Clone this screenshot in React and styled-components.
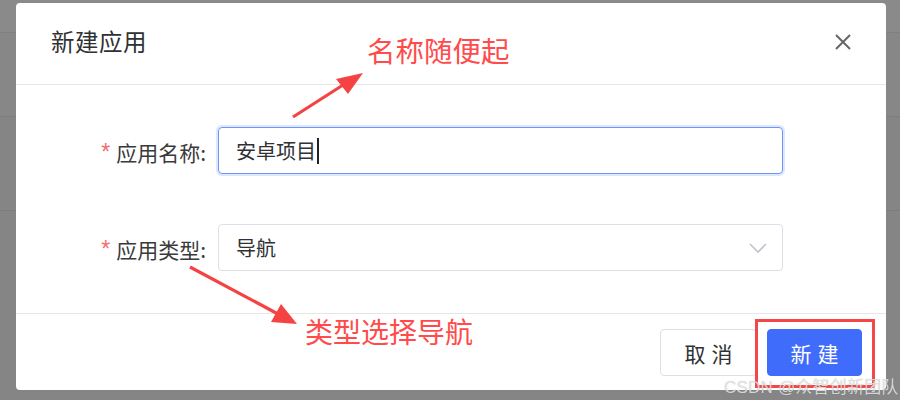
import React from "react";
import styled, { createGlobalStyle } from "styled-components";

const Global = createGlobalStyle`
  html, body { margin: 0; padding: 0; }
  body {
    width: 900px;
    height: 400px;
    overflow: hidden;
    font-family: "Noto Sans CJK SC", "Noto Sans", sans-serif;
  }
`;

const Page = styled.div`
  position: relative;
  width: 900px;
  height: 400px;
  background: #878787;
  display: flex;
  flex-direction: column;
  overflow: hidden;
`;

const BgBand = styled.div`
  height: ${(p) => p.$h}px;
  background: ${(p) => p.$bg};
  border-bottom: 1px solid ${(p) => p.$line};
`;

const Modal = styled.div`
  position: absolute;
  left: 16px;
  top: 3px;
  width: 870px;
  height: 387px;
  background: #fff;
  border-radius: 4px;
  display: flex;
  flex-direction: column;
`;

const Header = styled.div`
  height: 81px;
  border-bottom: 1px solid #e6e6e6;
  display: flex;
  align-items: center;
  justify-content: space-between;
  padding: 0 34px 0 35px;
`;

const Title = styled.div`
  font-size: 23.5px;
  color: #303133;
  letter-spacing: 0.5px;
  margin-top: -5px;
`;

const Close = styled.svg`
  width: 18px;
  height: 18px;
  margin-top: -3px;
`;

const Body = styled.div`
  height: 229px;
  border-bottom: 1px solid #e6e6e6;
  padding-top: 42px;
  box-sizing: border-box;
  display: flex;
  flex-direction: column;
  gap: 50px;
`;

const Row = styled.div`
  display: flex;
  align-items: center;
  height: 47px;
`;

const Label = styled.div`
  width: 202px;
  box-sizing: border-box;
  padding-right: 12px;
  text-align: right;
  font-size: 21px;
  color: #3a3a3a;
  display: flex;
  justify-content: flex-end;
  align-items: center;
  margin-top: 2px;
`;

const Star = styled.span`
  color: #f56c6c;
  margin-right: 6px;
  font-size: 23px;
  font-family: "Liberation Sans", sans-serif;
  margin-top: 2px;
`;

const Field = styled.div`
  width: 565px;
  height: 47px;
  box-sizing: border-box;
  border: 1px solid ${(p) => (p.$focus ? "#6d95f7" : "#dcdfe6")};
  box-shadow: ${(p) => (p.$focus ? "0 0 0 2px #dde7fd" : "none")};
  border-radius: 4px;
  display: flex;
  align-items: center;
  justify-content: space-between;
  padding: 0 15px 0 17px;
  font-size: 20px;
  color: #303133;
`;

const Value = styled.span`
  display: flex;
  align-items: center;
`;

const Caret = styled.span`
  display: inline-block;
  width: 2px;
  height: 26px;
  background: #222;
  margin-left: 1px;
`;

const Chevron = styled.svg`
  width: 18px;
  height: 12px;
`;

const Footer = styled.div`
  flex: 1;
  display: flex;
  justify-content: flex-end;
  align-items: flex-start;
  padding: 15px 24px 0 0;
  gap: 10px;
`;

const Button = styled.div`
  position: relative;
  width: ${(p) => p.$w}px;
  height: 47px;
  box-sizing: border-box;
  border-radius: 4px;
  border: 1px solid ${(p) => (p.$primary ? "#3f6cfb" : "#dcdfe6")};
  background: ${(p) => (p.$primary ? "#3f6cfb" : "#fff")};
  color: ${(p) => (p.$primary ? "#fff" : "#303133")};
  font-size: 21px;
  letter-spacing: 6px;
  display: flex;
  align-items: center;
  justify-content: center;
  padding-left: 6px;
`;

const Highlight = styled.div`
  position: absolute;
  left: -13px;
  top: -11px;
  width: 120px;
  height: 69px;
  box-sizing: border-box;
  border: 3px solid #f44848;
  pointer-events: none;
`;

const Note = styled.div`
  position: absolute;
  left: ${(p) => p.$x}px;
  top: ${(p) => p.$y}px;
  font-size: ${(p) => p.$size}px;
  color: #ff4b4b;
  white-space: nowrap;
  line-height: 1;
`;

const Arrows = styled.svg`
  position: absolute;
  left: 0;
  top: 0;
  width: 900px;
  height: 400px;
  pointer-events: none;
`;

const Watermark = styled.div`
  position: absolute;
  left: 724px;
  top: 373px;
  font-family: "Liberation Sans", "Noto Sans CJK SC", sans-serif;
  font-size: 17px;
  color: rgba(228, 228, 228, 0.9);
  text-shadow: 0 0 1px rgba(0, 0, 0, 0.2);
  white-space: nowrap;
  letter-spacing: 0.2px;
`;

export default function App() {
  return (
    <>
      <Global />
      <Page>
        <BgBand $h={32} $bg="#8a8a8a" $line="#808080" />
        <BgBand $h={84} $bg="#878787" $line="#7e7e7e" />
        <BgBand $h={95} $bg="#858585" $line="#7d7d7d" />
        <BgBand $h={190} $bg="#858585" $line="#858585" />

        <Modal>
          <Header>
            <Title>新建应用</Title>
            <Close viewBox="0 0 18 18">
              <path d="M2 2 L16 16 M16 2 L2 16" stroke="#666" strokeWidth="2" fill="none" />
            </Close>
          </Header>
          <Body>
            <Row>
              <Label>
                <Star>*</Star>应用名称:
              </Label>
              <Field $focus>
                <Value>
                  安卓项目
                  <Caret />
                </Value>
              </Field>
            </Row>
            <Row>
              <Label>
                <Star>*</Star>应用类型:
              </Label>
              <Field>
                <Value>导航</Value>
                <Chevron viewBox="0 0 18 12">
                  <path d="M1 2 L9 10 L17 2" stroke="#c0c4cc" strokeWidth="1.6" fill="none" />
                </Chevron>
              </Field>
            </Row>
          </Body>
          <Footer>
            <Button $w={97}>取消</Button>
            <Button $w={95} $primary>
              新建
              <Highlight />
            </Button>
          </Footer>
        </Modal>

        <Note $x={367} $y={36} $size={28.5}>名称随便起</Note>
        <Note $x={305} $y={317} $size={28}>类型选择导航</Note>

        <Arrows viewBox="0 0 900 400">
          <line x1="293" y1="117" x2="343" y2="85" stroke="#f54343" strokeWidth="3.2" />
          <polygon points="363,73 336,79 348,94" fill="#f54343" />
          <line x1="190" y1="267" x2="278" y2="314" stroke="#f54343" strokeWidth="3.2" />
          <polygon points="297,324 271,322 281,304" fill="#f54343" />
        </Arrows>

        <Watermark>CSDN @众智创新团队</Watermark>
      </Page>
    </>
  );
}
